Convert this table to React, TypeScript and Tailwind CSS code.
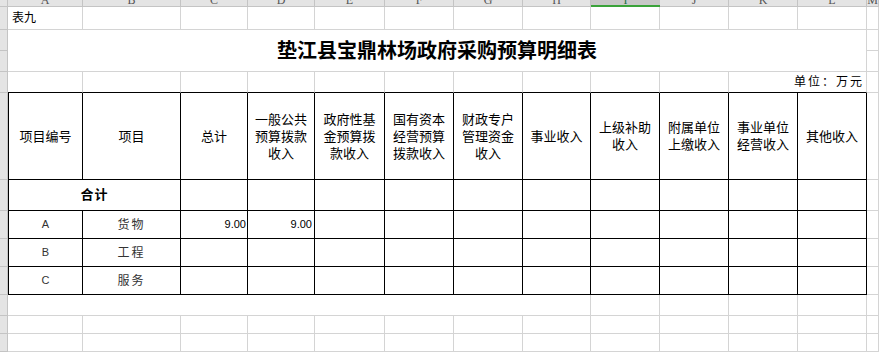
import React from 'react';

const CJK = "font-['Liberation_Sans','Noto_Sans_CJK_SC',sans-serif]";
const LETTERS = ['A', 'B', 'C', 'D', 'E', 'F', 'G', 'H', 'I', 'J', 'K', 'L', 'M'];
const HEADERS: string[][] = [
  ['项目编号'],
  ['项目'],
  ['总计'],
  ['一般公共', '预算拨款', '收入'],
  ['政府性基', '金预算拨', '款收入'],
  ['国有资本', '经营预算', '拨款收入'],
  ['财政专户', '管理资金', '收入'],
  ['事业收入'],
  ['上级补助', '收入'],
  ['附属单位', '上缴收入'],
  ['事业单位', '经营收入'],
  ['其他收入'],
];
const ITEMS = [
  { code: 'A', name: '货物', total: '9.00', general: '9.00' },
  { code: 'B', name: '工程', total: '', general: '' },
  { code: 'C', name: '服务', total: '', general: '' },
];

const grid = 'border-r border-b border-[#d4d4d4]';
const cell = 'border-r border-b border-black';

const RowHead = () => <div className="bg-[#e4e4e4] border-r border-b border-[#c4c4c4]" />;
const Blank = ({ className = grid }: { className?: string }) => <div className={className} />;

const App: React.FC = () => {
  return (
    <div className={`w-[879px] h-[352px] overflow-hidden bg-white text-black ${CJK}`}>
      <div className="grid grid-cols-[8px_75px_98px_67px_67px_70px_69px_69px_68px_69px_69px_69px_69px_1fr] grid-rows-[7px_23px_21px_21px_21px_87px_31px_28px_28px_28px_21px_18px_18px_18px]">
        {/* column header strip */}
        <div className="bg-[#e4e4e4] border-r border-b border-[#c4c4c4]" />
        {LETTERS.map((l) => (
          <div
            key={l}
            className={`overflow-hidden text-center ${
              l === 'I'
                ? 'bg-[#c8c8c8] border-b-2 border-[#3aa23a] text-[#217346]'
                : 'bg-[#e4e4e4] border-r border-b border-[#c4c4c4] text-[#555]'
            }`}
          >
            <div className="-mt-[6px] text-[12px] leading-[12px] font-['Liberation_Serif',serif]">{l}</div>
          </div>
        ))}

        {/* row 1 */}
        <RowHead />
        <div className={`${grid} flex items-center pl-[4px] text-[12px]`}>表九</div>
        {Array.from({ length: 12 }).map((_, i) => <Blank key={`r1-${i}`} />)}

        {/* title rows */}
        <RowHead />
        <div className={`${grid} col-span-12 row-span-2 flex items-center justify-center text-[20px] font-bold`}>
          垫江县宝鼎林场政府采购预算明细表
        </div>
        <Blank />
        <RowHead />
        <Blank />

        {/* unit row */}
        <RowHead />
        {Array.from({ length: 10 }).map((_, i) => (
          <div key={`r4-${i}`} className="border-r border-b border-[#d4d4d4] border-b-black" />
        ))}
        <div className="col-span-2 border-r border-b border-[#d4d4d4] border-b-black flex items-center justify-end pr-[2px] text-[12px] tracking-[2px]">
          单位：万元
        </div>
        <Blank />

        {/* table header */}
        <RowHead />
        {HEADERS.map((lines, i) => (
          <div
            key={`h-${i}`}
            className={`${cell} ${i === 0 ? 'border-l' : ''} flex flex-col items-center justify-center text-[13px] leading-[17px]`}
          >
            {lines.map((t) => (
              <span key={t}>{t}</span>
            ))}
          </div>
        ))}
        <Blank />

        {/* total row */}
        <RowHead />
        <div className={`${cell} border-l col-span-2 flex items-center justify-center text-[13px] font-bold tracking-[1px]`}>合计</div>
        {Array.from({ length: 10 }).map((_, i) => <Blank key={`t-${i}`} className={cell} />)}
        <Blank />

        {/* items */}
        {ITEMS.map((it) => (
          <React.Fragment key={it.code}>
            <RowHead />
            <div className={`${cell} border-l flex items-center justify-center text-[11px] text-[#333]`}>{it.code}</div>
            <div className={`${cell} flex items-center justify-center text-[12px] text-[#333] tracking-[2px]`}>{it.name}</div>
            <div className={`${cell} flex items-center justify-end pr-[1px] text-[11px]`}>{it.total}</div>
            <div className={`${cell} flex items-center justify-end pr-[2px] text-[11px]`}>{it.general}</div>
            {Array.from({ length: 8 }).map((_, i) => <Blank key={`${it.code}-${i}`} className={cell} />)}
            <Blank />
          </React.Fragment>
        ))}

        {/* blank row below table */}
        <RowHead />
        <div className={`${grid} col-span-8`} />
        {Array.from({ length: 5 }).map((_, i) => <Blank key={`b-${i}`} />)}

        {/* empty sheet rows */}
        {[0, 1, 2].map((r) => (
          <React.Fragment key={`e-${r}`}>
            <RowHead />
            {Array.from({ length: 13 }).map((_, i) => <Blank key={`e-${r}-${i}`} />)}
          </React.Fragment>
        ))}
      </div>
    </div>
  );
};

export default App;
